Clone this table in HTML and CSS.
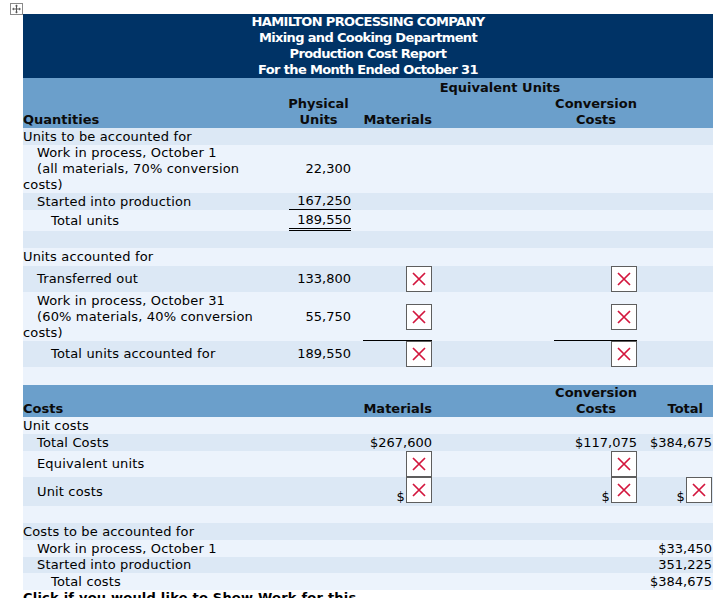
FILE: index.html
```html
<!DOCTYPE html>
<html>
<head>
<meta charset="utf-8">
<title>Production Cost Report</title>
<link rel="stylesheet" href="styles.css">
</head>
<body>
<div class="report">
  <span class="move-handle"><svg width="13" height="12" viewBox="0 0 13 12"><rect x="0.5" y="0.5" width="12" height="11" fill="#fff" stroke="#8a8a8a"/><path d="M6.5 2.5v7M3 6h7" stroke="#555" stroke-width="1"/><path d="M6.5 1.5l-1.6 1.8h3.2zM6.5 10.5l-1.6-1.8h3.2zM2 6l1.8-1.6v3.2zM11 6l-1.8-1.6v3.2z" fill="#555"/></svg></span>

  <div class="title">
    <div>HAMILTON PROCESSING COMPANY</div>
    <div>Mixing and Cooking Department</div>
    <div>Production Cost Report</div>
    <div>For the Month Ended October 31</div>
  </div>

  <div class="colhead colhead-q">
    <div class="eq">Equivalent Units</div>
    <div class="c1 hl">Quantities</div>
    <div class="c2 hc">Physical<br>Units</div>
    <div class="c3 hr">Materials</div>
    <div class="c5 hc">Conversion<br>Costs</div>
  </div>

  <div class="row dark"><div class="c1">Units to be accounted for</div></div>
  <div class="row light">
    <div class="c1"><div class="in1">Work in process, October 1</div><div class="in1">(all materials, 70% conversion</div><div>costs)</div></div>
    <div class="c2 num">22,300</div>
  </div>
  <div class="row dark">
    <div class="c1 in1">Started into production</div>
    <div class="c2 num"><div class="uline">167,250</div></div>
  </div>
  <div class="row light row-total">
    <div class="c1 in2">Total units</div>
    <div class="c2 num bottom"><div class="dline">189,550</div></div>
  </div>
  <div class="row dark"></div>
  <div class="row light row-18"><div class="c1">Units accounted for</div></div>
  <div class="row dark row-26">
    <div class="c1 in1">Transferred out</div>
    <div class="c2 num">133,800</div>
    <div class="c3 boxcell"><span class="xbox"><svg viewBox="0 0 24 24" width="24" height="24"><path d="M6 6L18 18M18 6L6 18"/></svg></span></div>
    <div class="c5 boxcell"><span class="xbox"><svg viewBox="0 0 24 24" width="24" height="24"><path d="M6 6L18 18M18 6L6 18"/></svg></span></div>
  </div>
  <div class="row light row-49">
    <div class="c1"><div class="in1">Work in process, October 31</div><div class="in1">(60% materials, 40% conversion</div><div>costs)</div></div>
    <div class="c2 num">55,750</div>
    <div class="c3 boxcell"><span class="xbox"><svg viewBox="0 0 24 24" width="24" height="24"><path d="M6 6L18 18M18 6L6 18"/></svg></span></div>
    <div class="c5 boxcell"><span class="xbox"><svg viewBox="0 0 24 24" width="24" height="24"><path d="M6 6L18 18M18 6L6 18"/></svg></span></div>
  </div>
  <div class="row dark row-26">
    <div class="c1 in2">Total units accounted for</div>
    <div class="c2 num">189,550</div>
    <div class="c3 boxcell"><div class="topline topline-m"><span class="xbox"><svg viewBox="0 0 24 24" width="24" height="24"><path d="M6 6L18 18M18 6L6 18"/></svg></span></div></div>
    <div class="c5 boxcell"><div class="topline topline-c"><span class="xbox"><svg viewBox="0 0 24 24" width="24" height="24"><path d="M6 6L18 18M18 6L6 18"/></svg></span></div></div>
  </div>
  <div class="row light row-18"></div>

  <div class="colhead colhead-c">
    <div class="c1 hl">Costs</div>
    <div class="c3 hr">Materials</div>
    <div class="c5 hc">Conversion<br>Costs</div>
    <div class="c6 hr total-h">Total</div>
  </div>

  <div class="row light"><div class="c1">Unit costs</div></div>
  <div class="row dark">
    <div class="c1 in1">Total Costs</div>
    <div class="c3 num">$267,600</div>
    <div class="c5 num">$117,075</div>
    <div class="c6 num">$384,675</div>
  </div>
  <div class="row light row-26">
    <div class="c1 in1">Equivalent units</div>
    <div class="c3 boxcell"><span class="xbox"><svg viewBox="0 0 24 24" width="24" height="24"><path d="M6 6L18 18M18 6L6 18"/></svg></span></div>
    <div class="c5 boxcell"><span class="xbox"><svg viewBox="0 0 24 24" width="24" height="24"><path d="M6 6L18 18M18 6L6 18"/></svg></span></div>
  </div>
  <div class="row dark row-unit">
    <div class="c1 in1">Unit costs</div>
    <div class="c3 boxcell money"><span class="dollar">$</span><span class="xbox"><svg viewBox="0 0 24 24" width="24" height="24"><path d="M6 6L18 18M18 6L6 18"/></svg></span></div>
    <div class="c5 boxcell money"><span class="dollar">$</span><span class="xbox"><svg viewBox="0 0 24 24" width="24" height="24"><path d="M6 6L18 18M18 6L6 18"/></svg></span></div>
    <div class="c6 boxcell money"><span class="dollar">$</span><span class="xbox"><svg viewBox="0 0 24 24" width="24" height="24"><path d="M6 6L18 18M18 6L6 18"/></svg></span></div>
  </div>
  <div class="row light"></div>
  <div class="row dark"><div class="c1">Costs to be accounted for</div></div>
  <div class="row light">
    <div class="c1 in1">Work in process, October 1</div>
    <div class="c6 num">$33,450</div>
  </div>
  <div class="row dark row-16">
    <div class="c1 in1">Started into production</div>
    <div class="c6 num">351,225</div>
  </div>
  <div class="row light">
    <div class="c1 in2">Total costs</div>
    <div class="c6 num">$384,675</div>
  </div>
</div>
<p class="showwork">Click if you would like to Show Work for this question: <span class="link">Open Show Work</span></p>
</body>
</html>
```

FILE: styles.css
```css
html, body {
  margin: 0;
  padding: 0;
  background: #fff;
}

body {
  font-family: "DejaVu Sans", Verdana, sans-serif;
  font-size: 13px;
  line-height: 16px;
  color: #000;
}

.report {
  position: relative;
  width: 690px;
  margin: 14px 0 0 23px;
  letter-spacing: 0.15px;
}

.move-handle {
  position: absolute;
  left: -13px;
  top: -11px;
  width: 13px;
  height: 12px;
  display: block;
}

.move-handle svg {
  display: block;
}

.title {
  background: #003366;
  color: #fff;
  font-weight: bold;
  text-align: center;
  line-height: 16px;
  letter-spacing: -0.65px;
  height: 64px;
}

.row,
.colhead {
  display: grid;
  grid-template-columns: 262px 67px 81px 121px 84px 75px;
}

.row {
  min-height: 17px;
  align-items: center;
}

.row-16 { min-height: 16px; }
.row-18 { min-height: 18px; }
.row-26 { min-height: 26px; }
.row-49 { min-height: 49px; }

.dark { background: #dce8f5; }
.light { background: #ecf3fc; }

.c1 { grid-column: 1; }
.c2 { grid-column: 2; }
.c3 { grid-column: 3; }
.c5 { grid-column: 5; }
.c6 { grid-column: 6; }

.in1 { padding-left: 14px; }
.in2 { padding-left: 28px; }

.num {
  text-align: right;
  padding-right: 1px;
  letter-spacing: 0;
}

.uline {
  margin-left: 4px;
  border-bottom: 1px solid #000;
  line-height: 16px;
}

.row-total {
  min-height: 21px;
}

.bottom {
  align-self: end;
}

.dline {
  margin-left: 4px;
  border-bottom: 3px double #000;
  line-height: 16px;
}

/* column headers */
.colhead {
  background: #6b9fcb;
  font-weight: bold;
  color: #0b0b0b;
  letter-spacing: 0;
}

.colhead-q {
  grid-template-rows: 16px 32px;
  padding-top: 2px;
}

.colhead-q .eq {
  grid-column: 3 / 6;
  grid-row: 1;
  text-align: center;
  padding-left: 10px;
}

.colhead-q .c1,
.colhead-q .c2,
.colhead-q .c3,
.colhead-q .c5 {
  grid-row: 2;
}

.colhead-c {
  height: 32px;
}

.hl {
  align-self: end;
}

.hc {
  align-self: end;
  text-align: center;
}

.hr {
  align-self: end;
  text-align: right;
  padding-right: 1px;
}

.total-h {
  padding-right: 10px;
}

/* answer boxes */
.boxcell {
  display: flex;
  justify-content: flex-end;
  align-items: center;
  padding-right: 1px;
}

.xbox {
  display: block;
  width: 24px;
  height: 24px;
  border: 1px solid #5e5e5e;
  background: #fff;
}

.xbox svg {
  display: block;
}

.xbox path {
  stroke: #d3163d;
  stroke-width: 1.7;
  fill: none;
}

.topline {
  display: flex;
  justify-content: flex-end;
  border-top: 1px solid #000;
  margin-top: -1px;
}

.topline-m { width: 69px; }
.topline-c { width: 83px; }

.row-unit {
  min-height: 29px;
}

.money {
  align-self: start;
  align-items: flex-end;
}

.dollar {
  line-height: 13px;
  margin-right: 1px;
}

.showwork {
  width: 400px;
  margin: 0 0 0 23px;
  font-weight: bold;
  line-height: 16px;
  letter-spacing: 0.22px;
}

.link {
  color: #1a56a0;
}
```
